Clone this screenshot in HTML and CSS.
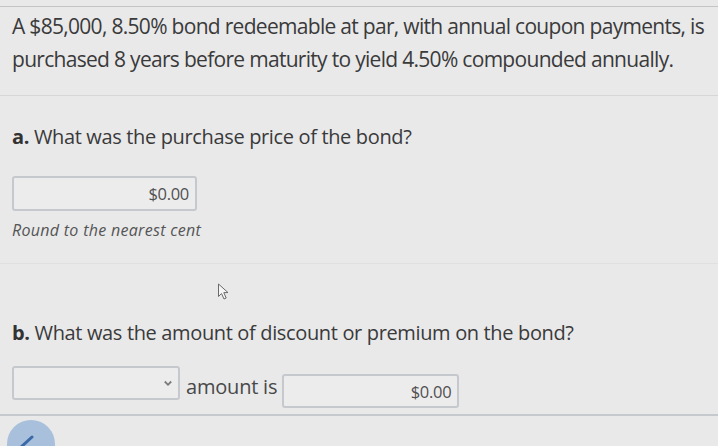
FILE: index.html
```html
<!DOCTYPE html>
<html>
<head>
<meta charset="utf-8">
<link rel="stylesheet" href="styles.css">
</head>
<body>
<div class="page">
  <div class="topline"></div>
  <p class="intro">A $85,000, 8.50% bond redeemable at par, with annual coupon payments, is purchased 8 years before maturity to yield 4.50% compounded annually.</p>
  <div class="sep"></div>
  <section class="part part-a">
    <p class="q"><b>a.</b> What was the purchase price of the bond?</p>
    <div class="field field-a"><span class="val">$0.00</span></div>
    <p class="hint">Round to the nearest cent</p>
  </section>
  <div class="sep faint"></div>
  <div class="cursor-row">
    <svg class="cursor" width="14" height="17" viewBox="0 0 14 17"><path d="M1.5 1 L1.5 13.5 L4.5 10.5 L7 16 L9.2 15 L6.8 9.6 L11 9.6 Z" fill="#f5f5f5" stroke="#6a6a6a" stroke-width="1" stroke-linejoin="round"/></svg>
  </div>
  <section class="part part-b">
    <p class="q"><b>b.</b> What was the amount of discount or premium on the bond?</p>
    <div class="row">
      <div class="field select"><svg class="chev" width="10" height="7" viewBox="0 0 10 7"><path d="M1.8 1.5 L5 4.8 L8.2 1.5" fill="none" stroke="#7a7a7a" stroke-width="1.8"/></svg></div>
      <span class="amt">amount is</span>
      <div class="field field-b"><span class="val">$0.00</span></div>
    </div>
  </section>
  <div class="sep bottom"></div>
  <div class="foot"><div class="circle"><svg width="48" height="26" viewBox="0 0 48 26"><path d="M13 28 L25 17" stroke="#3b68a6" stroke-width="3" fill="none" stroke-linecap="round"/></svg></div></div>
</div>
</body>
</html>
```
FILE: styles.css
```css
html, body {
  margin: 0;
  padding: 0;
  background: #e9e9ea;
}
body {
  font-family: "Open Sans", "Liberation Sans", sans-serif;
  color: #3a3a3a;
  width: 718px;
  height: 446px;
  overflow: hidden;
}
.page {
  padding: 0 0 0 12px;
  display: flex;
  flex-direction: column;
}
.topline {
  height: 1px;
  background: #c4c4c6;
  margin: 6px 0 0 -12px;
  width: 718px;
}
.intro {
  margin: 3px 0 0 0;
  font-size: 21px;
  line-height: 33px;
  letter-spacing: -0.7px;
  width: 706px;
}
.sep {
  height: 1px;
  background: #d6d6d8;
  margin: 19px 0 0 -12px;
  width: 718px;
}
.q {
  margin: 28px 0 0 0;
  font-size: 20px;
  line-height: 26px;
  letter-spacing: -0.35px;
}
.q b { font-weight: 700; color: #333; }
.field {
  border: 2px solid #c5c8cc;
  border-radius: 3px;
  background: #ececed;
  box-sizing: border-box;
  display: flex;
  align-items: center;
  justify-content: flex-end;
}
.field-a {
  width: 185px;
  height: 35px;
  margin-top: 26px;
  padding-right: 6px;
}
.val {
  font-size: 16.5px;
  color: #505050;
  letter-spacing: -0.3px;
}
.hint {
  margin: 9px 0 0 0;
  font-size: 16px;
  font-style: italic;
  color: #555;
  line-height: 20px;
  letter-spacing: 0.3px;
}
.sep.faint {
  margin-top: 23px;
  background: #e0e0e2;
}
.cursor-row {
  height: 56px;
  padding-left: 205px;
  padding-top: 19px;
  box-sizing: border-box;
}
.part-b .q { margin-top: 0; }
.row {
  display: flex;
  align-items: flex-start;
  margin-top: 20px;
}
.select {
  width: 168px;
  height: 34px;
  padding-right: 5px;
}
.amt {
  font-size: 20px;
  line-height: 24px;
  margin: 9px 5px 0 6px;
  color: #484848;
  letter-spacing: -0.2px;
}
.field-b {
  width: 177px;
  height: 34px;
  margin-top: 8px;
  padding-right: 6px;
}
.sep.bottom {
  margin-top: 6px;
  height: 2px;
  background: #c6c9cd;
}
.foot {
  height: 30px;
  position: relative;
}
.circle {
  position: absolute;
  left: -5px;
  top: 4px;
  width: 48px;
  height: 48px;
  border-radius: 50%;
  background: #a8c0db;
  overflow: hidden;
}
.circle svg { display: block; }
```
